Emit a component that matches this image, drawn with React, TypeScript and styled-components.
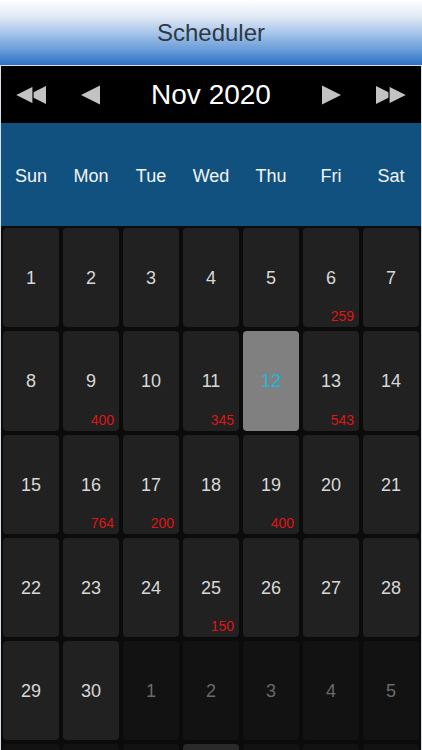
import styled, { createGlobalStyle } from "styled-components";

const GlobalStyle = createGlobalStyle`
  html, body {
    margin: 0;
    padding: 0;
    background: #0a0a0a;
    font-family: "Liberation Sans", Arial, sans-serif;
  }
`;

const Page = styled.div`
  width: 422px;
  height: 750px;
  overflow: hidden;
  display: flex;
  flex-direction: column;
  background: #0a0a0a;
`;

const Header = styled.header`
  height: 65px;
  flex: none;
  display: flex;
  align-items: center;
  justify-content: center;
  padding-top: 1px;
  box-sizing: border-box;
  background: linear-gradient(
    to bottom,
    #ffffff 0%,
    #e2eaf5 25%,
    #a9c6ea 50%,
    #6c9fd9 75%,
    #2c72c5 100%
  );
  color: #2e3944;
  font-size: 24px;
`;

const Calendar = styled.section`
  flex: 1;
  display: flex;
  flex-direction: column;
  border: 1px solid #d8e0ea;
  border-bottom: none;
  background: #0b0b0b;
`;

const Nav = styled.div`
  height: 57px;
  flex: none;
  display: grid;
  grid-template-columns: 60px 60px 1fr 60px 60px;
  align-items: center;
  background: #000;
  color: #fff;
`;

const NavButton = styled.button`
  display: flex;
  align-items: center;
  justify-content: center;
  height: 100%;
  padding: 0;
  background: none;
  border: none;
  color: #c3c3c3;
  cursor: pointer;
`;

const MonthTitle = styled.div`
  text-align: center;
  font-size: 28px;
  color: #fff;
  padding-top: 1px;
`;

const WeekHeader = styled.div`
  height: 103px;
  flex: none;
  box-sizing: border-box;
  padding-top: 3px;
  display: grid;
  grid-template-columns: repeat(7, 1fr);
  align-items: center;
  background: #11517f;
`;

const WeekDay = styled.div`
  text-align: center;
  font-size: 18px;
  color: #f4f4f4;
`;

const Grid = styled.div`
  display: grid;
  grid-template-columns: repeat(7, 56px);
  grid-auto-rows: 99.25px;
  gap: 4px;
  padding: 2px;
`;

type Kind = "normal" | "today" | "other" | "otherLight";

const Cell = styled.div<{ $kind: Kind }>`
  position: relative;
  border-radius: 4px;
  display: flex;
  align-items: center;
  justify-content: center;
  padding-top: 2px;
  box-sizing: border-box;
  background: ${(p) =>
    p.$kind === "today"
      ? "#808080"
      : p.$kind === "other"
      ? "#121212"
      : p.$kind === "otherLight"
      ? "#2a2a2a"
      : "#212121"};
`;

const DayNum = styled.span<{ $kind: Kind }>`
  font-size: 18px;
  color: ${(p) =>
    p.$kind === "today"
      ? "#1fb6dc"
      : p.$kind === "other" || p.$kind === "otherLight"
      ? "#6a6a6a"
      : "#d8d8d8"};
`;

const Count = styled.span`
  position: absolute;
  right: 5px;
  bottom: 4px;
  font-size: 14px;
  line-height: 14px;
  color: #dd1616;
`;

function DoubleArrow({ dir }: { dir: "left" | "right" }) {
  return (
    <svg
      width="32"
      height="20"
      viewBox="0 0 32 20"
      style={{ transform: dir === "right" ? "scaleX(-1)" : undefined }}
    >
      <polygon points="31,1 31,19 13,10" fill="currentColor" />
      <polygon
        points="18,1 18,19 0,10"
        fill="currentColor"
        stroke="#000"
        strokeWidth="1.2"
        strokeLinejoin="round"
      />
    </svg>
  );
}

function SingleArrow({ dir }: { dir: "left" | "right" }) {
  return (
    <svg
      width="20"
      height="20"
      viewBox="0 0 20 20"
      style={{ transform: dir === "right" ? "scaleX(-1)" : undefined }}
    >
      <polygon points="19,0.5 19,19.5 0,10" fill="currentColor" />
    </svg>
  );
}

type Day = {
  n: number;
  kind: Kind;
  count?: number;
};

const counts: Record<number, number> = {
  6: 259,
  9: 400,
  11: 345,
  13: 543,
  16: 764,
  17: 200,
  19: 400,
  25: 150,
};

// Nov 2020 starts on a Sunday; pad out with the first days of December
const days: Day[] = [
  ...Array.from({ length: 30 }, (_, i) => {
    const n = i + 1;
    return {
      n,
      kind: n === 12 ? "today" : "normal",
      count: counts[n],
    } as Day;
  }),
  ...Array.from({ length: 12 }, (_, i) => {
    const n = i + 1;
    return { n, kind: n === 9 ? "otherLight" : "other" } as Day;
  }),
];

const weekDays = ["Sun", "Mon", "Tue", "Wed", "Thu", "Fri", "Sat"];

export default function App() {
  return (
    <Page>
      <GlobalStyle />
      <Header>Scheduler</Header>
      <Calendar>
        <Nav>
          <NavButton aria-label="Previous year">
            <DoubleArrow dir="left" />
          </NavButton>
          <NavButton aria-label="Previous month">
            <SingleArrow dir="left" />
          </NavButton>
          <MonthTitle>Nov 2020</MonthTitle>
          <NavButton aria-label="Next month">
            <SingleArrow dir="right" />
          </NavButton>
          <NavButton aria-label="Next year">
            <DoubleArrow dir="right" />
          </NavButton>
        </Nav>
        <WeekHeader>
          {weekDays.map((d) => (
            <WeekDay key={d}>{d}</WeekDay>
          ))}
        </WeekHeader>
        <Grid>
          {days.map((d, i) => (
            <Cell key={i} $kind={d.kind}>
              <DayNum $kind={d.kind}>{d.n}</DayNum>
              {d.count && <Count>{d.count}</Count>}
            </Cell>
          ))}
        </Grid>
      </Calendar>
    </Page>
  );
}
